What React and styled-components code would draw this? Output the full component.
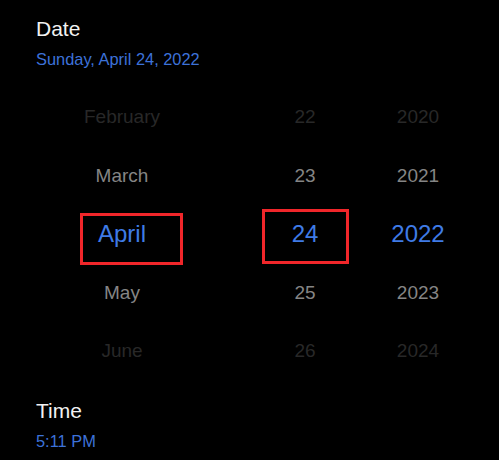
import styled, { createGlobalStyle } from "styled-components";

const GlobalStyle = createGlobalStyle`
  html, body {
    margin: 0;
    padding: 0;
    background: #000;
  }
  body {
    font-family: "Liberation Sans", Arial, sans-serif;
  }
`;

const Page = styled.div`
  width: 499px;
  height: 460px;
  background: #000;
  padding-top: 15px;
  box-sizing: border-box;
  overflow: hidden;
`;

const Section = styled.div`
  padding-left: 36px;
  display: flex;
  flex-direction: column;
  gap: 5px;
`;

const Title = styled.div`
  color: #f2f2f2;
  font-size: 21px;
  line-height: 28px;
`;

const Value = styled.div`
  color: #3d72d9;
  font-size: 16.4px;
  line-height: 22px;
`;

const Picker = styled.div`
  display: grid;
  grid-template-columns: 244px 122px 104px;
  margin: 18px 0 16px;
`;

const Column = styled.div`
  display: flex;
  flex-direction: column;
`;

const fade = {
  0: "#282828",
  1: "#858585",
  2: "#3f7be6",
};

const Cell = styled.div`
  position: relative;
  height: 58.5px;
  display: flex;
  align-items: center;
  justify-content: center;
  color: ${(p) => fade[p.$level]};
  font-size: ${(p) => (p.$level === 2 ? "24px" : "19px")};
  white-space: nowrap;
`;

const Highlight = styled.span`
  position: absolute;
  left: calc(50% + ${(p) => p.$dx}px);
  top: calc(50% + ${(p) => p.$dy}px);
  width: ${(p) => p.$w}px;
  height: ${(p) => p.$h}px;
  border: 3px solid #f0262a;
  box-sizing: border-box;
  pointer-events: none;
`;

const columns = [
  {
    items: ["February", "March", "April", "May", "June"],
    box: { dx: -42, dy: -21, w: 103, h: 52 },
  },
  {
    items: ["22", "23", "24", "25", "26"],
    box: { dx: -43, dy: -25, w: 87, h: 55 },
  },
  {
    items: ["2020", "2021", "2022", "2023", "2024"],
  },
];

const levels = [0, 1, 2, 1, 0];

const App = () => {
  return (
    <Page>
      <GlobalStyle />
      <Section>
        <Title>Date</Title>
        <Value>Sunday, April 24, 2022</Value>
      </Section>

      <Picker>
        {columns.map((col, ci) => (
          <Column key={ci}>
            {col.items.map((item, i) => (
              <Cell key={item} $level={levels[i]}>
                {item}
                {i === 2 && col.box && (
                  <Highlight
                    $dx={col.box.dx}
                    $dy={col.box.dy}
                    $w={col.box.w}
                    $h={col.box.h}
                  />
                )}
              </Cell>
            ))}
          </Column>
        ))}
      </Picker>

      <Section>
        <Title>Time</Title>
        <Value>5:11 PM</Value>
      </Section>
    </Page>
  );
};

export default App;
